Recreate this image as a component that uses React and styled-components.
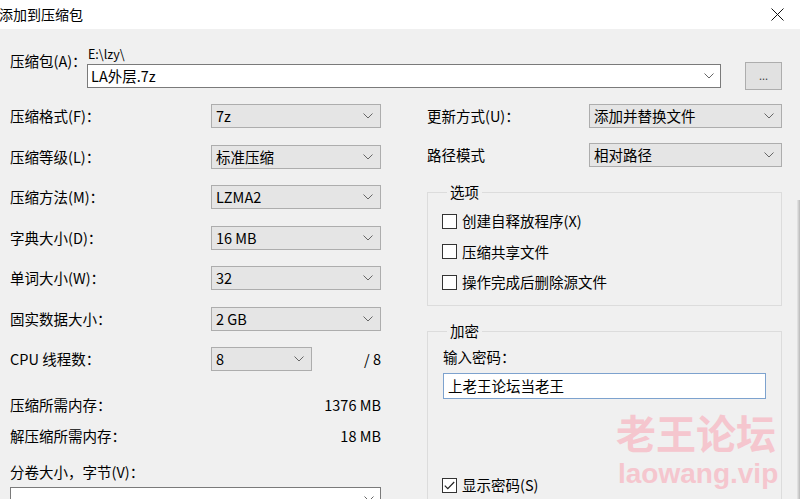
import React from 'react';
import styled, { createGlobalStyle } from 'styled-components';

const GlobalStyle = createGlobalStyle`
  html, body { margin: 0; padding: 0; }
  body {
    width: 800px; height: 499px; overflow: hidden; background: #f0f0f0;
    font-family: "Noto Sans CJK SC", "Noto Sans", sans-serif;
    font-size: 14.5px; color: #000;
  }
  * { box-sizing: border-box; }
`;

const Window = styled.div`
  width: 800px; height: 499px; position: relative; overflow: hidden;
  display: flex; flex-direction: column; background: #f0f0f0;
`;

const TitleBar = styled.div`
  height: 29px; flex-shrink: 0; background: #fff;
  display: flex; align-items: center; justify-content: space-between;
  padding-right: 16px;
`;

const Title = styled.div`
  font-size: 14px; line-height: 29px; margin-left: -1px; letter-spacing: 0;
`;

const CloseBtn = styled.div`
  width: 13px; height: 13px; display: flex;
`;

const Body = styled.div`
  flex: 1; display: flex; flex-direction: column;
  padding: 16px 18px 0 10px;
`;

const ArchiveGrid = styled.div`
  display: grid;
  grid-template-columns: 77px 1fr 61px;
  grid-template-rows: 17px 24px;
  row-gap: 2px;
`;

const ArchiveLabel = styled.div`
  grid-column: 1; grid-row: 1 / 3; align-self: start;
  margin-top: 6px; line-height: 20px;
`;

const PathText = styled.div`
  grid-column: 2; grid-row: 1; font-size: 12.5px; line-height: 17px; padding-left: 1px;
`;

const Combo = styled.div`
  height: 24px; background: #fff; border: 1px solid ${p => p.$border || '#7a7a7a'};
  display: flex; align-items: center; justify-content: space-between;
  padding: 0 6px 0 3px; line-height: 20px;
`;

const ArchiveCombo = styled(Combo)`
  grid-column: 2; grid-row: 2;
`;

const BrowseBtn = styled.div`
  grid-column: 3; grid-row: 2; justify-self: end; align-self: center;
  width: 37px; height: 28px; background: #e1e1e1; border: 1px solid #adadad;
  display: flex; align-items: center; justify-content: center;
  font-size: 11px; color: #444; padding-bottom: 3px;
`;

const Columns = styled.div`
  display: grid; grid-template-columns: 371px 355px; column-gap: 46px;
  margin-top: 8px;
`;

const Col = styled.div`
  display: flex; flex-direction: column;
`;

const FieldRow = styled.div`
  height: ${p => p.$h}px; display: flex; align-items: center;
`;

const FieldLabel = styled.div`
  width: ${p => p.$w}px; flex-shrink: 0; line-height: 20px; white-space: nowrap;
`;

const Select = styled.div`
  height: 24px; ${p => (p.$w ? `width: ${p.$w}px;` : 'flex: 1;')}
  background: #e5e5e5; border: 1px solid #adadad;
  display: flex; align-items: center; justify-content: space-between;
  padding: 0 7px 0 4px; line-height: 20px;
`;

const SideValue = styled.div`
  margin-left: auto; line-height: 20px;
`;

const InfoRow = styled.div`
  height: 31px; display: flex; align-items: center; justify-content: space-between;
  margin-top: ${p => p.$mt || 0}px;
`;

const VolumeLabel = styled.div`
  line-height: 20px; margin-top: 11.5px;
`;

const VolumeCombo = styled(Combo)`
  margin-top: 5px;
`;

const Group = styled.fieldset`
  margin: ${p => p.$mt}px 0 0 0;
  padding: ${p => p.$pt}px 15px ${p => p.$pb}px 14px;
  border: 1px solid #dcdcdc;
  min-width: 0;
  display: flex; flex-direction: column;
`;

const Legend = styled.legend`
  padding: 0 3px; margin-left: 5px; line-height: 20px;
`;

const CheckRow = styled.div`
  height: ${p => p.$h || 30.5}px; display: flex; align-items: center;
  margin-top: ${p => p.$mt || 0}px;
`;

const Box = styled.div`
  width: 15px; height: 15px; border: 1px solid #333; background: #fff;
  display: flex; align-items: center; justify-content: center; flex-shrink: 0;
`;

const CheckText = styled.span`
  margin-left: 5px; line-height: 20px;
`;

const PlainLabel = styled.div`
  line-height: 20px; padding-left: 1px;
`;

const PwdInput = styled.div`
  height: 26px; margin-top: 6px; margin-left: 1px; background: #fff;
  border: 1px solid #7da2ce; display: flex; align-items: center; padding-left: 4px;
  line-height: 20px;
`;

const Watermark = styled.div`
  position: absolute; left: 616px; top: 412px;
  display: flex; flex-direction: column; align-items: flex-start;
  color: #f5c6ce; pointer-events: none;
`;

const WmCn = styled.div`
  font-family: "Noto Sans CJK SC", sans-serif; font-weight: 700;
  font-size: 40px; line-height: 40px; letter-spacing: 0;
`;

const WmEn = styled.div`
  font-family: "Liberation Sans", Arial, sans-serif; font-weight: 700;
  font-size: 28px; line-height: 28px; margin-top: 8px; margin-left: 2px;
`;

const EdgeStrip = styled.div`
  position: absolute; right: 0; top: 200px; bottom: 0; width: 3px;
  background: linear-gradient(to right, #e8e8e8, #b8b8b8);
`;

const Chevron = () => (
  <svg width="10" height="6" viewBox="0 0 10 6">
    <polyline points="0.5,0.5 5,5 9.5,0.5" fill="none" stroke="#666" strokeWidth="1" />
  </svg>
);

const Check = () => (
  <svg width="11" height="9" viewBox="0 0 11 9">
    <polyline points="0.8,4.6 3.8,7.6 10.2,1" fill="none" stroke="#222" strokeWidth="1.2" />
  </svg>
);

const leftRows = [
  ['压缩格式(F)：', '7z'],
  ['压缩等级(L)：', '标准压缩'],
  ['压缩方法(M)：', 'LZMA2'],
  ['字典大小(D)：', '16 MB'],
  ['单词大小(W)：', '32'],
  ['固实数据大小：', '2 GB'],
];

const options = ['创建自释放程序(X)', '压缩共享文件', '操作完成后删除源文件'];

export default function App() {
  return (
    <Window>
      <GlobalStyle />
      <TitleBar>
        <Title>添加到压缩包</Title>
        <CloseBtn>
          <svg width="13" height="13" viewBox="0 0 13 13">
            <path d="M0.5 0.5 L12.5 12.5 M12.5 0.5 L0.5 12.5" stroke="#111" strokeWidth="1" />
          </svg>
        </CloseBtn>
      </TitleBar>
      <Body>
        <ArchiveGrid>
          <ArchiveLabel>压缩包(A)：</ArchiveLabel>
          <PathText>E:\lzy\</PathText>
          <ArchiveCombo>
            <span>LA外层.7z</span>
            <Chevron />
          </ArchiveCombo>
          <BrowseBtn>...</BrowseBtn>
        </ArchiveGrid>
        <Columns>
          <Col>
            {leftRows.map(([l, v]) => (
              <FieldRow key={l} $h={40.5}>
                <FieldLabel $w={201}>{l}</FieldLabel>
                <Select>
                  <span>{v}</span>
                  <Chevron />
                </Select>
              </FieldRow>
            ))}
            <FieldRow $h={40.5}>
              <FieldLabel $w={201}>CPU 线程数：</FieldLabel>
              <Select $w={101}>
                <span>8</span>
                <Chevron />
              </Select>
              <SideValue>/ 8</SideValue>
            </FieldRow>
            <InfoRow $mt={9}>
              <span>压缩所需内存：</span>
              <span>1376 MB</span>
            </InfoRow>
            <InfoRow>
              <span>解压缩所需内存：</span>
              <span>18 MB</span>
            </InfoRow>
            <VolumeLabel>分卷大小，字节(V)：</VolumeLabel>
            <VolumeCombo>
              <span></span>
              <Chevron />
            </VolumeCombo>
          </Col>
          <Col>
            <FieldRow $h={39.5}>
              <FieldLabel $w={162}>更新方式(U)：</FieldLabel>
              <Select>
                <span>添加并替换文件</span>
                <Chevron />
              </Select>
            </FieldRow>
            <FieldRow $h={39.5}>
              <FieldLabel $w={162}>路径模式</FieldLabel>
              <Select>
                <span>相对路径</span>
                <Chevron />
              </Select>
            </FieldRow>
            <Group $mt={7} $pt={4} $pb={7}>
              <Legend>选项</Legend>
              {options.map(o => (
                <CheckRow key={o}>
                  <Box />
                  <CheckText>{o}</CheckText>
                </CheckRow>
              ))}
            </Group>
            <Group $mt={15.5} $pt={6} $pb={20}>
              <Legend>加密</Legend>
              <PlainLabel>输入密码：</PlainLabel>
              <PwdInput>上老王论坛当老王</PwdInput>
              <CheckRow $h={20} $mt={76}>
                <Box>
                  <Check />
                </Box>
                <CheckText>显示密码(S)</CheckText>
              </CheckRow>
            </Group>
          </Col>
        </Columns>
      </Body>
      <Watermark>
        <WmCn>老王论坛</WmCn>
        <WmEn>laowang.vip</WmEn>
      </Watermark>
      <EdgeStrip />
    </Window>
  );
}
